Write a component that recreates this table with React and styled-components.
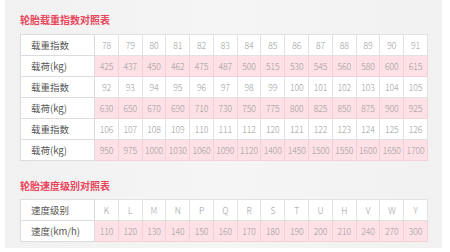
import React from 'react';
import styled, { createGlobalStyle } from 'styled-components';

const GlobalStyle = createGlobalStyle`
  html, body {
    margin: 0;
    padding: 0;
    background: #ffffff;
  }
  body {
    font-family: "Noto Sans CJK SC", "Noto Sans", sans-serif;
  }
`;

const Panel = styled.div`
  width: 437px;
  height: 248px;
  margin-left: 5px;
  box-sizing: border-box;
  padding: 13px 0 0 15px;
  background: linear-gradient(90deg, #f1f1f1 0%, #f5f5f5 50%, #f1f1f1 100%);
`;

const Title = styled.h3`
  margin: ${(p) => p.$top || 0}px 0 0 0;
  height: 14px;
  line-height: 14px;
  font-size: 10px;
  font-weight: 700;
  color: #e9465c;
`;

const Table = styled.table`
  margin-top: ${(p) => p.$gap}px;
  width: 408px;
  table-layout: fixed;
  border-collapse: collapse;
  background: #ffffff;
  border: 1px solid #d6d6d6;
`;

const Row = styled.tr`
  height: ${(p) => p.$h}px;
  background: ${(p) => (p.$pink ? '#fde1e6' : '#ffffff')};
`;

const Label = styled.td`
  width: 64px;
  padding: 0 0 0 10px;
  border: 1px solid #dcdcdc;
  font-size: 9.5px;
  font-weight: 400;
  color: #555555;
  background: #ffffff;
  white-space: nowrap;
`;

const Cell = styled.td`
  padding: 0;
  border: 1px solid #e0e0e0;
  border-color: ${(p) => (p.$pink ? '#f3cfd6' : '#e2e2e2')};
  text-align: center;
  font-size: 8.6px;
  font-weight: 300;
  color: #9a9a9a;
  white-space: nowrap;
  letter-spacing: -0.1px;
`;

const loadRows = [
  ['载重指数', [78, 79, 80, 81, 82, 83, 84, 85, 86, 87, 88, 89, 90, 91]],
  ['载荷(kg)', [425, 437, 450, 462, 475, 487, 500, 515, 530, 545, 560, 580, 600, 615], true],
  ['载重指数', [92, 93, 94, 95, 96, 97, 98, 99, 100, 101, 102, 103, 104, 105]],
  ['载荷(kg)', [630, 650, 670, 690, 710, 730, 750, 775, 800, 825, 850, 875, 900, 925], true],
  ['载重指数', [106, 107, 108, 109, 110, 111, 112, 120, 121, 122, 123, 124, 125, 126]],
  ['载荷(kg)', [950, 975, 1000, 1030, 1060, 1090, 1120, 1400, 1450, 1500, 1550, 1600, 1650, 1700], true],
];

const speedRows = [
  ['速度级别', ['K', 'L', 'M', 'N', 'P', 'Q', 'R', 'S', 'T', 'U', 'H', 'V', 'W', 'Y']],
  ['速度(km/h)', [110, 120, 130, 140, 150, 160, 170, 180, 190, 200, 210, 240, 270, 300], true],
];

const DataTable = ({ rows, gap, rowHeight }) => (
  <Table $gap={gap}>
    <colgroup>
      <col style={{ width: 74 }} />
    </colgroup>
    <tbody>
      {rows.map(([label, values, pink], i) => (
        <Row key={i} $pink={pink} $h={rowHeight}>
          <Label>{label}</Label>
          {values.map((v, j) => (
            <Cell key={j} $pink={pink}>{v}</Cell>
          ))}
        </Row>
      ))}
    </tbody>
  </Table>
);

export default function App() {
  return (
    <>
      <GlobalStyle />
      <Panel>
        <Title>轮胎载重指数对照表</Title>
        <DataTable rows={loadRows} gap={7} rowHeight={21} />
        <Title $top={18}>轮胎速度级别对照表</Title>
        <DataTable rows={speedRows} gap={6} rowHeight={21} />
      </Panel>
    </>
  );
}
